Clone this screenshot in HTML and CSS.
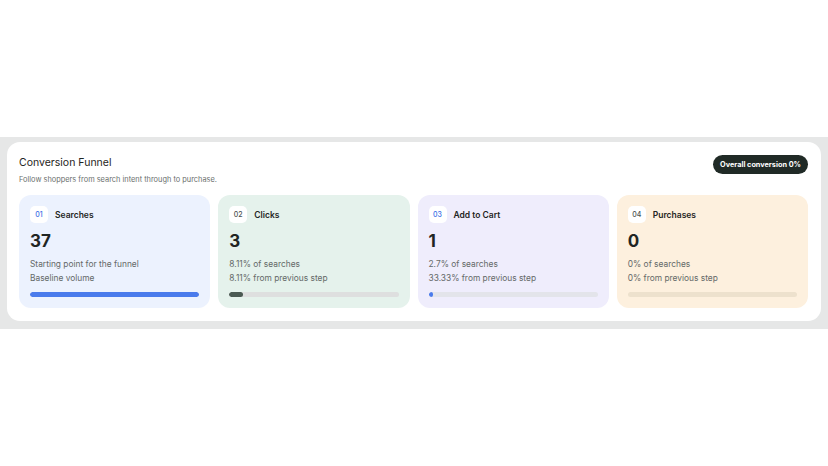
FILE: index.html
```
<!DOCTYPE html>
<html lang="en">
<head>
    <meta charset="UTF-8">
    <title>Conversion Funnel</title>
    <meta name="viewport" content="width=device-width, initial-scale=1">
    <link rel="stylesheet" href="styles.css">
</head>
<body>
    <div class="band">
        <section class="panel">
            <div class="panel-head">
                <div>
                    <h2 class="panel-title">Conversion Funnel</h2>
                    <p class="panel-sub">Follow shoppers from search intent through to purchase.</p>
                </div>
                <span class="overall">Overall conversion 0%</span>
            </div>
            <div class="steps">
                <div class="step step-blue">
                    <div class="step-head">
                        <span class="step-num num-blue">01</span>
                        <span class="step-name">Searches</span>
                    </div>
                    <div class="step-value">37</div>
                    <p class="step-line">Starting point for the funnel</p>
                    <p class="step-line">Baseline volume</p>
                    <div class="track"><div class="fill fill-blue" style="width: 100%"></div></div>
                </div>
                <div class="step step-green">
                    <div class="step-head">
                        <span class="step-num">02</span>
                        <span class="step-name">Clicks</span>
                    </div>
                    <div class="step-value">3</div>
                    <p class="step-line">8.11% of searches</p>
                    <p class="step-line">8.11% from previous step</p>
                    <div class="track track-dotted"><div class="fill fill-dark" style="width: 8.11%"></div></div>
                </div>
                <div class="step step-violet">
                    <div class="step-head">
                        <span class="step-num num-blue">03</span>
                        <span class="step-name">Add to Cart</span>
                    </div>
                    <div class="step-value">1</div>
                    <p class="step-line">2.7% of searches</p>
                    <p class="step-line">33.33% from previous step</p>
                    <div class="track"><div class="fill fill-blue" style="width: 2.7%"></div></div>
                </div>
                <div class="step step-cream">
                    <div class="step-head">
                        <span class="step-num">04</span>
                        <span class="step-name">Purchases</span>
                    </div>
                    <div class="step-value">0</div>
                    <p class="step-line">0% of searches</p>
                    <p class="step-line">0% from previous step</p>
                    <div class="track track-cream"><div class="fill" style="width: 0%"></div></div>
                </div>
            </div>
        </section>
    </div>
</body>
</html>
```

FILE: styles.css
```
body {
    margin: 0;
    background-color: #ffffff;
    font-family: Inter, 'Noto Sans', sans-serif;
    color: #1f2523;
}

/* gray strip holding the panel */
.band {
    margin-top: 137px;
    padding: 5px 7px 8px 7px;
    background-color: #e6e7e7;
}

.panel {
    background-color: #ffffff;
    border-radius: 13px;
    padding: 12px 13px 13px 12px;
}

.panel-head {
    display: flex;
    justify-content: space-between;
    align-items: flex-start;
}

.panel-title {
    margin: 0;
    font-size: 10.5px;
    font-weight: 400;
    line-height: 17px;
    color: #1f2523;
}

.panel-sub {
    margin: 2px 0 0 0;
    font-size: 7.4px;
    line-height: 13px;
    color: #6b6f6e;
}

.overall {
    margin-top: 1px;
    background-color: #202a26;
    color: #ffffff;
    font-size: 7.3px;
    font-weight: 700;
    line-height: 19px;
    padding: 0 7px;
    border-radius: 10px;
}

/* Steps */
.steps {
    display: grid;
    grid-template-columns: repeat(4, 1fr);
    gap: 8px;
    margin-top: 9px;
}

.step {
    border-radius: 12px;
    padding: 11px 11px 11px 11px;
}

.step-blue { background-color: #ecf2fe; }
.step-green { background-color: #e5f2ec; }
.step-violet { background-color: #efedfc; }
.step-cream { background-color: #fdf0de; }

.step-head {
    display: flex;
    align-items: center;
    gap: 7px;
}

.step-num {
    width: 18px;
    height: 17px;
    border-radius: 5px;
    background-color: #ffffff;
    display: flex;
    align-items: center;
    justify-content: center;
    font-size: 7px;
    font-weight: 500;
    color: #4b5250;
}

.num-blue {
    color: #3b6fe6;
}

.step-name {
    font-size: 8.5px;
    font-weight: 600;
    color: #1f2523;
}

.step-value {
    margin-top: 6px;
    font-size: 17px;
    font-weight: 700;
    line-height: 24px;
    color: #1f2523;
}

.step-line {
    margin: 0;
    font-size: 8.4px;
    line-height: 14px;
    color: #646968;
}

.step-value + .step-line {
    margin-top: 4px;
}

.track {
    margin-top: 7px;
    height: 5px;
    border-radius: 3px;
    background-color: #e3e4ea;
    overflow: hidden;
}

.track-dotted {
    background-color: #dedfdf;
    background-image: radial-gradient(#cfd1d0 0.6px, transparent 0.7px);
    background-size: 2px 2px;
}

.track-cream {
    background-color: #ede1cd;
}

.fill {
    height: 100%;
    border-radius: 3px;
    min-width: 0;
}

.fill-blue { background-color: #4a7bec; }
.fill-dark { background-color: #4b5a53; }
```
